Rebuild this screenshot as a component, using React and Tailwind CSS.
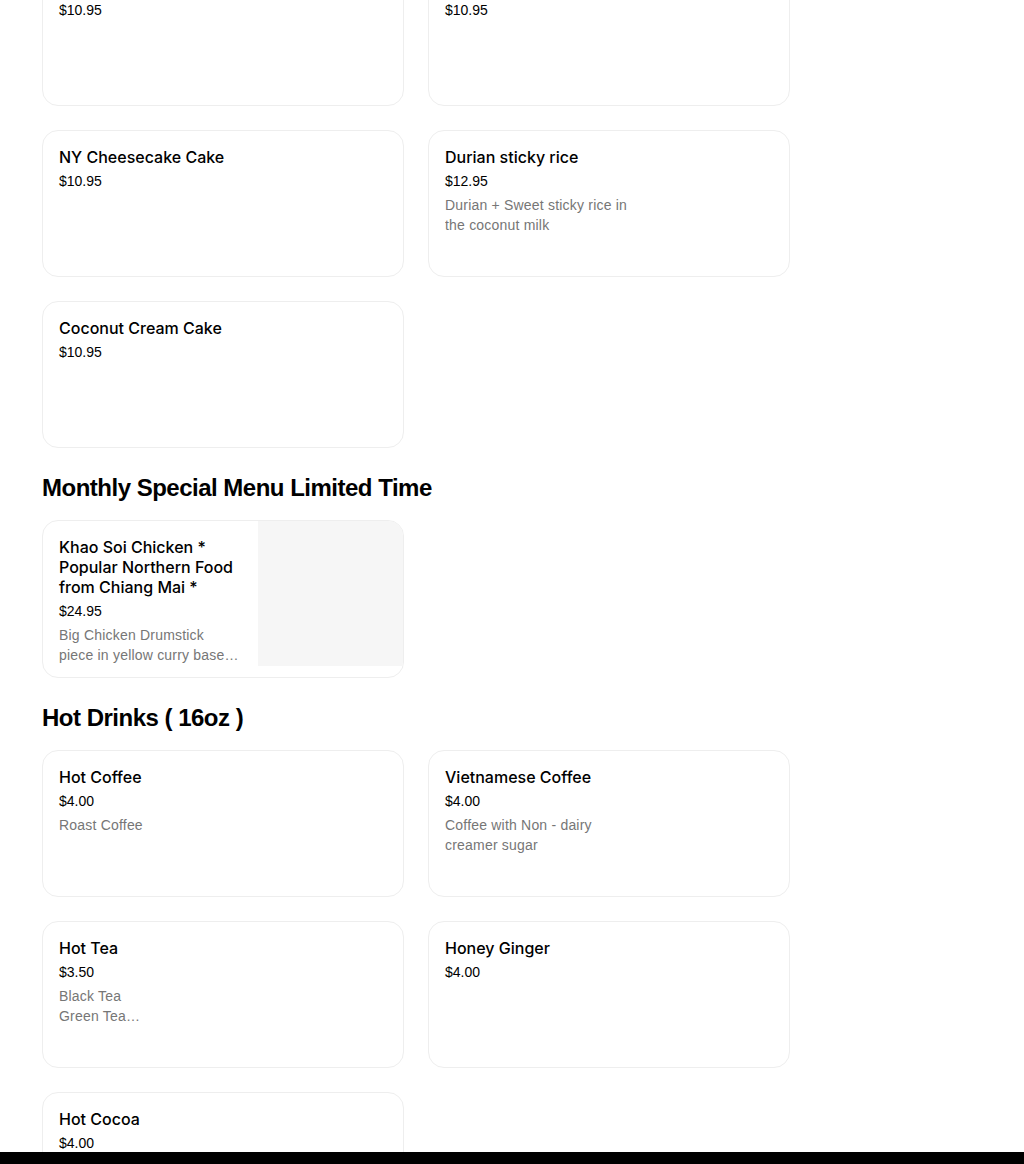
import React from 'react';

const sections = [
    {
        title: null,
        items: [
            { name: 'Mango Cheesecake', price: '$10.95' },
            { name: 'Chocolate Cake', price: '$10.95' },
            { name: 'NY Cheesecake Cake', price: '$10.95' },
            { name: 'Durian sticky rice', price: '$12.95', desc: 'Durian + Sweet sticky rice in the coconut milk' },
            { name: 'Coconut Cream Cake', price: '$10.95' },
        ],
    },
    {
        title: 'Monthly Special Menu Limited Time',
        items: [
            {
                name: 'Khao Soi Chicken * Popular Northern Food from Chiang Mai *',
                price: '$24.95',
                desc: 'Big Chicken Drumstick piece in yellow curry base with egg noodles, pickled mustard and shallots',
                image: true,
            },
        ],
    },
    {
        title: 'Hot Drinks ( 16oz )',
        items: [
            { name: 'Hot Coffee', price: '$4.00', desc: 'Roast Coffee' },
            { name: 'Vietnamese Coffee', price: '$4.00', desc: 'Coffee with Non - dairy creamer sugar' },
            { name: 'Hot Tea', price: '$3.50', desc: 'Black Tea\nGreen Tea\nJasmine Tea' },
            { name: 'Honey Ginger', price: '$4.00' },
            { name: 'Hot Cocoa', price: '$4.00' },
        ],
    },
];

const MenuCard = ({ item }) => (
    <div className="flex min-h-[147px] overflow-hidden rounded-2xl border border-[#eeeeee] bg-white">
        {/* Text */}
        <div className="w-[215px] shrink-0 px-4 pt-4 pb-3">
            <h3 className="text-[16px] leading-5 font-medium text-black font-['Inter',sans-serif]">
                {item.name}
            </h3>
            <p className="mt-1 text-[14px] leading-5 text-black">{item.price}</p>
            {item.desc && (
                <p className="mt-1 line-clamp-2 whitespace-pre-line text-[14px] leading-5 tracking-[0.2px] text-[#767676]">
                    {item.desc}
                </p>
            )}
        </div>

        {/* Image slot */}
        <div className="flex flex-1 justify-end">
            {item.image && <div className="h-[145px] w-[145px] bg-[#f6f6f6]" />}
        </div>
    </div>
);

const App = () => {
    return (
        <div className="min-h-[1164px] bg-white font-['Liberation_Sans',Arial,sans-serif]">
            <div className="w-[748px] ml-[42px] -mt-[41px]">
                {sections.map((section, i) => (
                    <section key={i}>
                        {section.title && (
                            <h2 className="pt-6 mb-4 text-[24px] leading-8 font-bold tracking-[-0.5px] text-black">
                                {section.title}
                            </h2>
                        )}
                        <div className="grid grid-cols-2 gap-6">
                            {section.items.map((item) => (
                                <MenuCard key={item.name} item={item} />
                            ))}
                        </div>
                    </section>
                ))}
            </div>

            {/* Footer edge */}
            <div className="fixed inset-x-0 bottom-0 h-3 bg-black" />
        </div>
    );
};

export default App;
